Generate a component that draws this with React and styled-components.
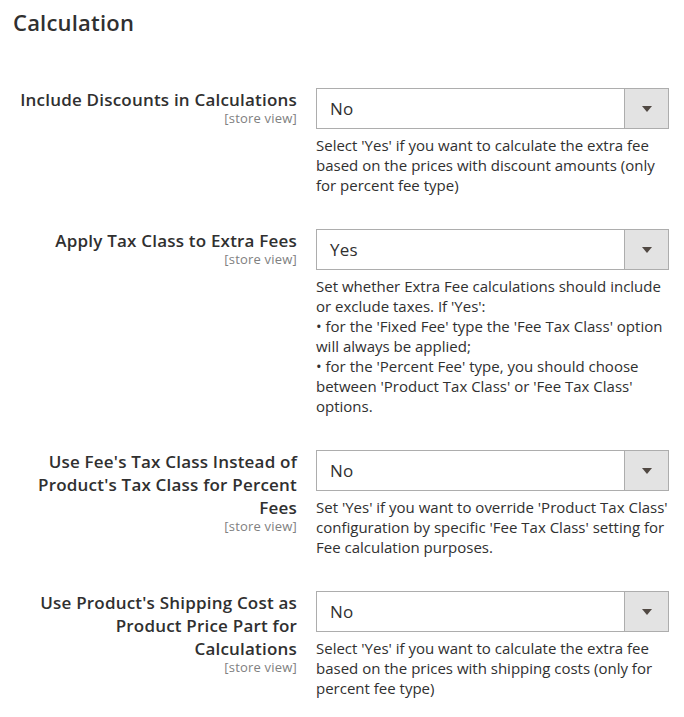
import React from 'react';
import styled, { createGlobalStyle } from 'styled-components';

const GlobalStyle = createGlobalStyle`
  body {
    margin: 0;
    background: #ffffff;
    font-family: "Open Sans", "Liberation Sans", sans-serif;
    color: #303030;
  }
`;

const Page = styled.div`
  width: 684px;
  padding: 7px 15px 20px 0;
  box-sizing: border-box;
`;

const Title = styled.h2`
  margin: 0 0 51px 13px;
  font-size: 22px;
  font-weight: 600;
  line-height: 30px;
  letter-spacing: 0.2px;
  color: #303030;
`;

const Fields = styled.div`
  display: flex;
  flex-direction: column;
  gap: 33px;
`;

const Row = styled.div`
  display: grid;
  grid-template-columns: 297px 353px;
  column-gap: 19px;
  align-items: start;
`;

const LabelCell = styled.div`
  padding-left: 15px;
  text-align: right;
`;

const Label = styled.div`
  font-size: 17px;
  font-weight: 600;
  line-height: 23px;
  letter-spacing: 0.2px;
  color: #303030;
`;

const Scope = styled.div`
  font-size: 13px;
  line-height: 15px;
  letter-spacing: 0.2px;
  color: #808080;
`;

const Control = styled.div`
  display: flex;
  flex-direction: column;
`;

const Select = styled.div`
  display: flex;
  height: 41px;
  border: 1px solid #adadad;
  box-sizing: border-box;
  background: #ffffff;
`;

const SelectValue = styled.div`
  flex: 1;
  padding-left: 13px;
  font-size: 17px;
  line-height: 39px;
  letter-spacing: 0.2px;
  color: #303030;
`;

const Arrow = styled.div`
  width: 43px;
  background: #e3e3e3;
  border-left: 1px solid #adadad;
  display: flex;
  align-items: center;
  justify-content: center;

  &::after {
    content: '';
    border-left: 5px solid transparent;
    border-right: 5px solid transparent;
    border-top: 6px solid #514943;
    margin-top: 1px;
  }
`;

const Note = styled.div`
  margin-top: 6px;
  margin-bottom: 1px;
  font-size: 15px;
  line-height: 20px;
  color: #303030;
`;

const fields = [
  {
    label: 'Include Discounts in Calculations',
    value: 'No',
    note: ["Select 'Yes' if you want to calculate the extra fee based on the prices with discount amounts (only for percent fee type)"],
  },
  {
    label: 'Apply Tax Class to Extra Fees',
    value: 'Yes',
    note: [
      "Set whether Extra Fee calculations should include or exclude taxes. If 'Yes':",
      "\u2022 for the 'Fixed Fee' type the 'Fee Tax Class' option will always be applied;",
      "\u2022 for the 'Percent Fee' type, you should choose between 'Product Tax Class' or 'Fee Tax Class' options.",
    ],
  },
  {
    label: "Use Fee's Tax Class Instead of Product's Tax Class for Percent Fees",
    value: 'No',
    note: ["Set 'Yes' if you want to override 'Product Tax Class' configuration by specific 'Fee Tax Class' setting for Fee calculation purposes."],
  },
  {
    label: "Use Product's Shipping Cost as Product Price Part for Calculations",
    value: 'No',
    note: ["Select 'Yes' if you want to calculate the extra fee based on the prices with shipping costs (only for percent fee type)"],
  },
];

export default function App() {
  return (
    <>
      <GlobalStyle />
      <Page>
        <Title>Calculation</Title>
        <Fields>
          {fields.map((f) => (
            <Row key={f.label}>
              <LabelCell>
                <Label>{f.label}</Label>
                <Scope>[store view]</Scope>
              </LabelCell>
              <Control>
                <Select>
                  <SelectValue>{f.value}</SelectValue>
                  <Arrow />
                </Select>
                <Note>
                  {f.note.map((line) => (
                    <div key={line}>{line}</div>
                  ))}
                </Note>
              </Control>
            </Row>
          ))}
        </Fields>
      </Page>
    </>
  );
}
